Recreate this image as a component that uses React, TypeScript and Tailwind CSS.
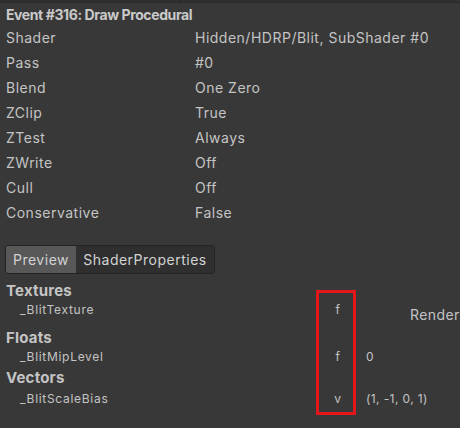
const rows: [string, string][] = [
  ["Shader", "Hidden/HDRP/Blit, SubShader #0"],
  ["Pass", "#0"],
  ["Blend", "One Zero"],
  ["ZClip", "True"],
  ["ZTest", "Always"],
  ["ZWrite", "Off"],
  ["Cull", "Off"],
  ["Conservative", "False"],
];

function PropRow({ name, type, value, extra }: { name: string; type: string; value?: string; extra?: string }) {
  return (
    <div className="flex h-[20px] items-center text-[12px] tracking-[0.7px]">
      <span className="w-[316px] pl-[20px]">{name}</span>
      <span className="w-[44px] text-center">{type}</span>
      {value && <span className="pl-[6px] tracking-[0.4px]">{value}</span>}
      {extra && <span className="relative top-[4px] pl-[50px] text-[14px] tracking-[0.4px]">{extra}</span>}
    </div>
  );
}

export default function App() {
  return (
    <div
      className="relative h-[428px] w-[460px] overflow-hidden bg-[#383838] text-[#c4c4c4]"
      style={{ fontFamily: "Inter, 'Noto Sans', sans-serif" }}
    >
      {/* top splitter strip */}
      <div className="flex h-[3px] border-b border-[#2a2a2a] bg-[#303030]">
        <div className="w-[181px] border-r border-[#242424]" />
      </div>

      {/* title */}
      <div className="flex h-[22px] items-center px-[6px] text-[14px] font-bold tracking-[-0.4px] text-[#cacaca]">
        Event #316: Draw Procedural
      </div>

      {/* state rows */}
      {rows.map(([k, v]) => (
        <div key={k} className="flex h-[25px] items-center text-[14px] tracking-[0.5px]">
          <span className="w-[195px] pl-[6px]">{k}</span>
          <span>{v}</span>
        </div>
      ))}

      {/* tabs */}
      <div className="ml-[5px] mt-[20px] flex h-[29px] w-[210px] overflow-hidden rounded-[3px] border border-[#232323] text-[14px] tracking-[0.5px]">
        <div className="flex w-[70px] items-center justify-center bg-[#585858] text-[#d2d2d2]">Preview</div>
        <div className="flex flex-1 items-center justify-center bg-[#2f2f2f] text-[#d2d2d2]">ShaderProperties</div>
      </div>

      {/* properties */}
      <div className="mt-[8px]">
        <div className="flex h-[18px] items-center pl-[6px] text-[15px] font-bold tracking-[0.2px]">Textures</div>
        <PropRow name="_BlitTexture" type="f" extra="Render" />
        <div className="mt-[9px] flex h-[18px] items-center pl-[6px] text-[15px] font-bold tracking-[0.2px]">Floats</div>
        <PropRow name="_BlitMipLevel" type="f" value="0" />
        <div className="flex h-[22px] items-center pl-[6px] pt-[1px] text-[15px] font-bold tracking-[0.2px]">Vectors</div>
        <PropRow name="_BlitScaleBias" type="v" value="(1, -1, 0, 1)" />
      </div>

      {/* annotation box */}
      <div className="absolute left-[316px] top-[290px] h-[125px] w-[40px] border-[3px] border-[#e3161c]" />
    </div>
  );
}
